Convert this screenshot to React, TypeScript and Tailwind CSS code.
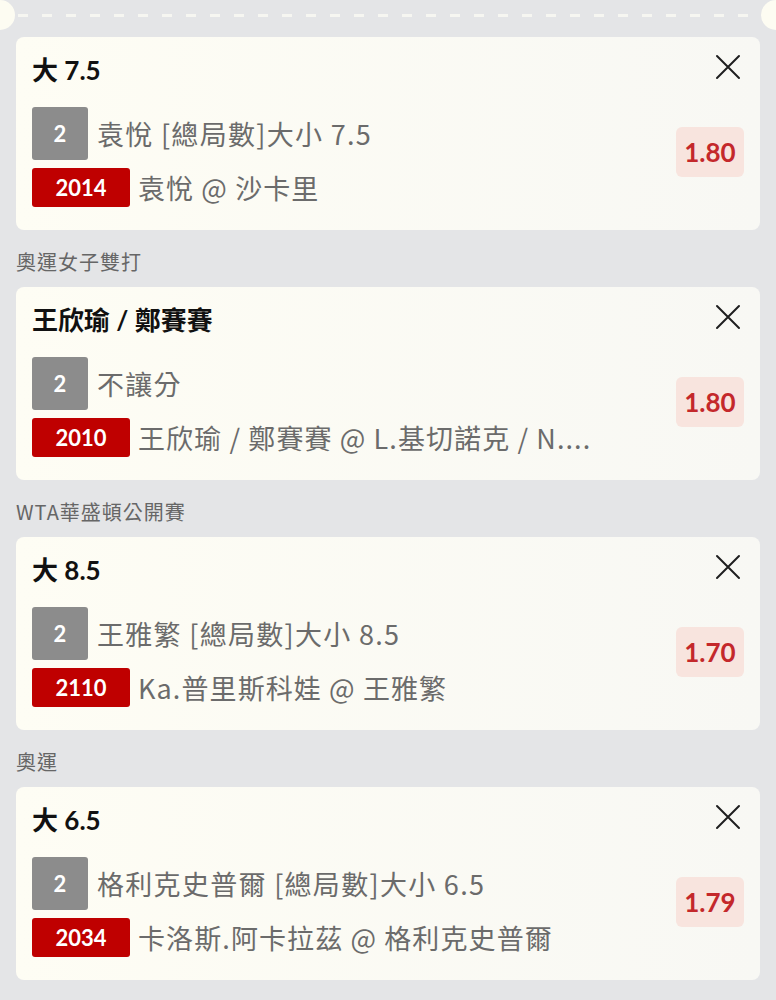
import React from 'react';

type Bet = {
  league?: string;
  title: string;
  count: string;
  selection: string;
  code: string;
  match: string;
  odds: string;
};

const bets: Bet[] = [
  {
    title: '大 7.5',
    count: '2',
    selection: '袁悅 [總局數]大小 7.5',
    code: '2014',
    match: '袁悅 @ 沙卡里',
    odds: '1.80',
  },
  {
    league: '奧運女子雙打',
    title: '王欣瑜 / 鄭賽賽',
    count: '2',
    selection: '不讓分',
    code: '2010',
    match: '王欣瑜 / 鄭賽賽 @ L.基切諾克 / N....',
    odds: '1.80',
  },
  {
    league: 'WTA華盛頓公開賽',
    title: '大 8.5',
    count: '2',
    selection: '王雅繁 [總局數]大小 8.5',
    code: '2110',
    match: 'Ka.普里斯科娃 @ 王雅繁',
    odds: '1.70',
  },
  {
    league: '奧運',
    title: '大 6.5',
    count: '2',
    selection: '格利克史普爾 [總局數]大小 6.5',
    code: '2034',
    match: '卡洛斯.阿卡拉茲 @ 格利克史普爾',
    odds: '1.79',
  },
];

const cjk = { fontFamily: '"Noto Sans CJK TC", sans-serif' };

const CloseIcon = () => (
  <svg width="26" height="26" viewBox="0 0 26 26" className="mr-[3px]">
    <path
      d="M2 2 L24 24 M24 2 L2 24"
      stroke="#1f1f1f"
      strokeWidth="2"
      strokeLinecap="round"
      fill="none"
    />
  </svg>
);

const BetCard = ({ bet }: { bet: Bet }) => (
  <div className="flex rounded-lg bg-linear-to-r from-[#fefdf4] to-[#f8f8f4] pt-[17px] pb-[23px] px-4">
    <div className="flex-1 min-w-0">
      <h3 className="h-[32px] text-[26px] leading-[32px] font-bold text-[#111]">
        {bet.title}
      </h3>
      <div className="mt-[21px] flex items-center">
        <span className="flex h-[53px] w-[56px] shrink-0 items-center justify-center rounded-[3px] bg-[#8c8c8c] text-[22px] font-bold text-white">
          {bet.count}
        </span>
        <span
          className="ml-[9px] text-[27px] leading-[38px] tracking-[1.3px] text-[#6b6b6b] whitespace-nowrap"
          style={cjk}
        >
          {bet.selection}
        </span>
      </div>
      <div className="mt-2 flex items-center">
        <span className="flex h-[39px] w-[98px] shrink-0 items-center justify-center rounded-[3px] bg-[#bf0000] text-[22px] font-bold text-white">
          {bet.code}
        </span>
        <span
          className="ml-2 text-[27px] leading-[38px] tracking-[1.1px] text-[#6b6b6b] whitespace-nowrap"
          style={cjk}
        >
          {bet.match}
        </span>
      </div>
    </div>
    <div className="flex flex-col items-end">
      <CloseIcon />
      <span className="mt-[47px] flex h-[50px] w-[68px] items-center justify-center rounded-md bg-[#f8e4de] text-[26px] font-bold text-[#c4282b]">
        {bet.odds}
      </span>
    </div>
  </div>
);

export default function App() {
  return (
    <div
      className="min-h-[1000px] bg-[#e4e5e7] pb-6"
      style={{ fontFamily: 'Lato, "Noto Sans CJK TC", sans-serif' }}
    >
      <div className="flex h-[30px] items-center">
        <div className="h-[30px] w-[15px] rounded-r-full bg-[#fdfcf2]" />
        <div className="h-[3px] flex-1 bg-[repeating-linear-gradient(90deg,transparent_0_3px,#f6f6f1_3px_13px,transparent_13px_24px)]" />
        <div className="h-[30px] w-[15px] rounded-l-full bg-[#fdfcf2]" />
      </div>
      <div className="px-4 pt-[7px]">
        {bets.map((bet, i) => (
          <div key={i}>
            {bet.league ? (
              <div
                className="pt-[18px] pb-[11px] text-[20px] leading-[28px] tracking-[1px] text-[#666]"
                style={cjk}
              >
                {bet.league}
              </div>
            ) : null}
            <BetCard bet={bet} />
          </div>
        ))}
      </div>
    </div>
  );
}
